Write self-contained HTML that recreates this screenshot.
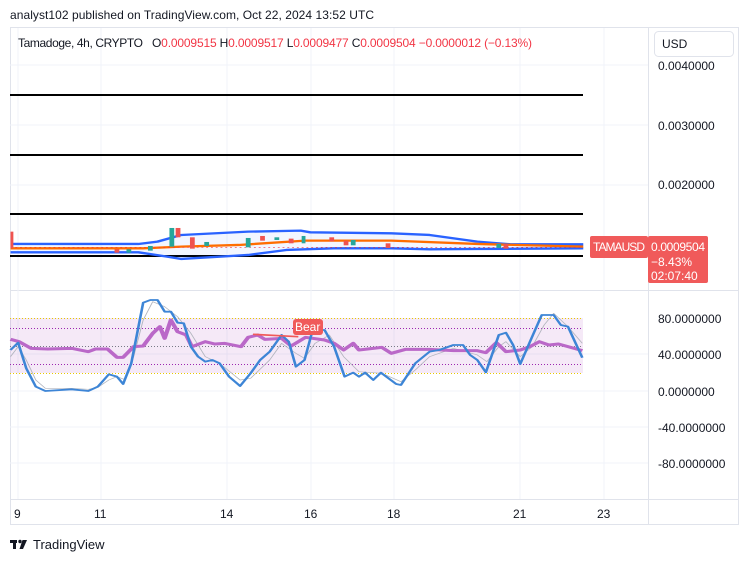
<!DOCTYPE html>
<html><head><meta charset="utf-8"><style>
body{margin:0;background:#fff;width:740px;height:562px;overflow:hidden;font-family:"Liberation Sans",sans-serif}
svg{position:absolute;left:0;top:0}
</style></head><body>
<svg width="740" height="562" viewBox="0 0 740 562" font-family="Liberation Sans, sans-serif">
<rect width="740" height="562" fill="#fff"/>
<text x="10" y="19" font-size="12" fill="#131722" textLength="364">analyst102 published on TradingView.com, Oct 22, 2024 13:52 UTC</text>
<rect x="10.5" y="27.5" width="728" height="497" fill="none" stroke="#e0e3eb"/>
<line x1="648.5" y1="28" x2="648.5" y2="524" stroke="#e0e3eb"/>
<line x1="10" y1="290.5" x2="738" y2="290.5" stroke="#e0e3eb"/>
<line x1="10" y1="499.5" x2="738" y2="499.5" stroke="#e0e3eb"/>
<g stroke="#f0f3fa">
<line x1="18" y1="28" x2="18" y2="499"/><line x1="101" y1="28" x2="101" y2="499"/><line x1="227" y1="28" x2="227" y2="499"/><line x1="311" y1="28" x2="311" y2="499"/><line x1="394" y1="28" x2="394" y2="499"/><line x1="520" y1="28" x2="520" y2="499"/><line x1="604" y1="28" x2="604" y2="499"/>
<line x1="10" y1="65" x2="648" y2="65"/><line x1="10" y1="125" x2="648" y2="125"/><line x1="10" y1="185" x2="648" y2="185"/>
<line x1="10" y1="391" x2="648" y2="391"/><line x1="10" y1="427" x2="648" y2="427"/><line x1="10" y1="463" x2="648" y2="463"/><line x1="10" y1="354" x2="648" y2="354"/>
</g>
<text x="18" y="47" font-size="12" fill="#131722" textLength="125">Tamadoge, 4h, CRYPTO</text>
<text x="152" y="47" font-size="12" fill="#131722" textLength="380">O<tspan fill="#f23645">0.0009515</tspan> H<tspan fill="#f23645">0.0009517</tspan> L<tspan fill="#f23645">0.0009477</tspan> C<tspan fill="#f23645">0.0009504</tspan> <tspan fill="#f23645">−0.0000012 (−0.13%)</tspan></text>
<rect x="654.5" y="31.5" width="79" height="25" rx="4" fill="#fff" stroke="#e0e3eb"/>
<text x="662" y="48" font-size="12" fill="#131722">USD</text>
<g font-size="12" fill="#131722">
<text x="658" y="70">0.0040000</text><text x="658" y="130">0.0030000</text><text x="658" y="189">0.0020000</text>
<text x="658" y="323">80.0000000</text><text x="658" y="359">40.0000000</text><text x="658" y="396">0.0000000</text><text x="658" y="432">-40.0000000</text><text x="658" y="468">-80.0000000</text>
</g>
<g stroke="#000" stroke-width="2">
<line x1="10" y1="95" x2="583" y2="95"/><line x1="10" y1="155" x2="583" y2="155"/><line x1="10" y1="214" x2="583" y2="214"/><line x1="10" y1="256" x2="583" y2="256"/>
</g>
<g transform="scale(0.4773,0.3333)" fill="none" stroke-linejoin="round">
<path d="M22,732 L290,732 330,725 380,705 520,695 630,692 650,697 820,700 900,705 1000,725 1070,733 1222,733 L1222,745 1000,747 900,748 820,745 700,745 600,750 520,765 380,777 350,770 290,757 22,757Z" fill="#2962ff" fill-opacity="0.06" stroke="none"/>
<path d="M22,732 L290,732 330,725 380,705 520,695 630,692 650,697 820,700 900,705 1000,725 1070,733 1222,733" stroke="#2962ff" stroke-width="7"/>
<path d="M22,757 L290,757 350,770 380,777 520,765 600,750 700,745 820,745 900,748 1000,747 1222,745" stroke="#2962ff" stroke-width="7"/>
<path d="M22,745 L300,745 380,740 500,735 640,722 820,722 1000,732 1222,740" stroke="#ff6d00" stroke-width="7"/>
<line x1="22" y1="742" x2="1222" y2="742" stroke="#f23645" stroke-width="2" stroke-dasharray="4 6"/>
<g stroke="none">
<rect x="22" y="695" width="6" height="50" fill="#ef5350"/>
<rect x="355" y="684" width="10" height="56" fill="#26a69a"/>
<rect x="368" y="684" width="10" height="28" fill="#ef5350"/>
<rect x="398" y="712" width="10" height="34" fill="#ef5350"/>
<rect x="428" y="726" width="10" height="12" fill="#26a69a"/>
<rect x="515" y="714" width="10" height="28" fill="#26a69a"/>
<rect x="545" y="708" width="10" height="14" fill="#ef5350"/>
<rect x="575" y="712" width="10" height="8" fill="#26a69a"/>
<rect x="605" y="716" width="10" height="14" fill="#ef5350"/>
<rect x="632" y="708" width="8" height="22" fill="#26a69a"/>
<rect x="690" y="712" width="10" height="12" fill="#ef5350"/>
<rect x="720" y="722" width="10" height="14" fill="#ef5350"/>
<rect x="735" y="720" width="10" height="16" fill="#26a69a"/>
<rect x="808" y="730" width="10" height="14" fill="#ef5350"/>
<rect x="1040" y="732" width="10" height="12" fill="#26a69a"/>
<rect x="1055" y="732" width="10" height="14" fill="#ef5350"/>
<rect x="240" y="748" width="10" height="10" fill="#ef5350"/>
<rect x="265" y="748" width="10" height="10" fill="#26a69a"/>
<rect x="310" y="738" width="10" height="14" fill="#26a69a"/>
</g>
</g>
<rect x="590" y="236" width="58" height="22" rx="2" fill="#f05a5a"/>
<text x="593" y="251" font-size="12" fill="#fff" textLength="52">TAMAUSD</text>
<rect x="648" y="236" width="60" height="47" rx="2" fill="#f05a5a"/>
<text x="651" y="251" font-size="12" fill="#fff" textLength="54">0.0009504</text>
<text x="651" y="266" font-size="12" fill="#fff">−8.43%</text>
<text x="651" y="280" font-size="12" fill="#fff">02:07:40</text>
<rect x="10" y="318" width="573" height="55" fill="#9c27b0" fill-opacity="0.1"/>
<line x1="10" y1="318.5" x2="583" y2="318.5" stroke="#e6c800" stroke-dasharray="1 2"/>
<line x1="10" y1="373.5" x2="583" y2="373.5" stroke="#e6c800" stroke-dasharray="1 2"/>
<line x1="10" y1="328.5" x2="583" y2="328.5" stroke="#9c27b0" stroke-dasharray="1 2"/>
<line x1="10" y1="364.5" x2="583" y2="364.5" stroke="#9c27b0" stroke-dasharray="1 2"/>
<line x1="10" y1="346.5" x2="583" y2="346.5" stroke="#787b86" stroke-dasharray="1 2"/>
<g transform="translate(0,280) scale(0.4773,0.3333)" fill="none" stroke-linejoin="round">
<path d="M22,230 L38,200 55,240 75,300 95,325 150,325 185,328 205,322 228,300 245,290 260,298 280,230 300,120 320,65 345,80 372,110 400,160 430,230 460,250 503,300 525,295 565,240 590,190 620,220 638,235 660,190 690,165 720,230 752,275 800,280 840,305 870,270 900,230 950,205 1000,225 1020,245 1045,200 1060,185 1090,230 1115,200 1140,135 1160,100 1190,140 1220,190" stroke="#b2b5be" stroke-width="2"/>
<path d="M22,178 L40,185 65,205 100,207 150,205 185,215 200,207 225,207 245,232 258,232 280,200 300,198 320,160 335,140 345,175 358,120 372,155 390,165 402,200 430,185 450,192 470,190 505,200 520,172 540,165 555,178 590,175 610,198 640,172 680,180 700,190 720,210 740,190 752,210 800,202 820,220 850,208 900,208 950,212 1000,212 1018,218 1040,188 1060,215 1090,210 1110,200 1130,185 1150,195 1170,192 1190,200 1220,212" stroke="#ba68c8" stroke-width="9"/>
<path d="M22,210 L38,188 55,265 75,320 95,333 150,328 185,333 205,320 228,283 245,290 258,312 275,250 300,68 315,60 330,60 345,95 358,95 372,128 385,130 400,200 415,230 430,245 445,240 460,250 480,290 503,318 525,280 545,240 565,215 590,165 605,185 620,260 638,240 655,150 680,150 700,200 722,290 740,278 752,290 765,278 782,300 798,278 830,312 840,315 870,250 900,215 920,210 950,195 970,195 985,225 1000,240 1018,277 1045,165 1060,158 1075,195 1090,252 1115,170 1135,105 1160,105 1175,135 1190,140 1220,233" stroke="#3d85d6" stroke-width="5.5"/>
<line x1="530" y1="163" x2="625" y2="170" stroke="#f05a5a" stroke-width="5"/>
</g>
<rect x="293" y="319" width="30" height="16" rx="3" fill="#f05a5a"/>
<text x="295" y="331" font-size="12" fill="#fff">Bear</text>
<g font-size="12" fill="#131722">
<text x="14" y="518">9</text><text x="94" y="518">11</text><text x="220" y="518">14</text><text x="304" y="518">16</text><text x="387" y="518">18</text><text x="513" y="518">21</text><text x="597" y="518">23</text>
</g>
<g fill="#131722">
<rect x="10" y="540" width="7" height="3"/><rect x="13" y="540" width="3" height="9"/>
<circle cx="20" cy="541.5" r="1.7"/><path d="M22.5 540 L27 540 L23 549 L19.5 549 Z"/>
</g>
<text x="33" y="549" font-size="13" fill="#131722">TradingView</text>
</svg>
</body></html>
